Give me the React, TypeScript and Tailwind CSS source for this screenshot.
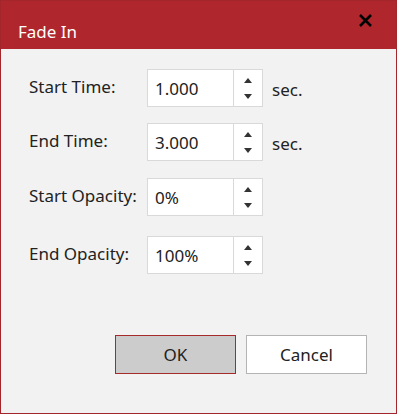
import { useState } from "react";

const font = { fontFamily: '"Segoe UI", "Noto Sans", "Open Sans", sans-serif' };

function Spin({ value, unit }: { value: string; unit?: string }) {
  return (
    <div className="flex items-center">
      <div className="flex h-[38px] border border-[#d9d9d9] bg-white">
        <div className="w-[85px] pl-[7px] pt-[9px] text-[17px] leading-[20px] text-[#222]">{value}</div>
        <div className="w-[29px] border-l border-[#d9d9d9] flex flex-col items-center justify-center gap-[11px]">
          <svg width="8" height="5" viewBox="0 0 8 5"><path d="M4 0 L8 5 L0 5 Z" fill="#333" /></svg>
          <svg width="8" height="5" viewBox="0 0 8 5"><path d="M0 0 L8 0 L4 5 Z" fill="#333" /></svg>
        </div>
      </div>
      {unit && <span className="ml-[9px] pt-[4px] text-[17px] text-[#222]">{unit}</span>}
    </div>
  );
}

function Row({ label, value, unit, mt }: { label: string; value: string; unit?: string; mt: string }) {
  return (
    <div className={`flex items-center ${mt}`}>
      <div className="w-[118px] pb-[3px] text-[17px] text-[#222]">{label}</div>
      <Spin value={value} unit={unit} />
    </div>
  );
}

export default function App() {
  const [open] = useState(true);
  if (!open) return null;
  return (
    <div style={font} className="w-[397px] h-[414px] border border-[#a3262c] bg-[#f2f2f2] flex flex-col">
      <div className="h-[48px] bg-[#b0262d] flex items-center justify-between pl-[17px] pr-[24px] shrink-0">
        <span className="pt-[14px] text-[17px] text-white">Fade In</span>
        <svg width="13" height="13" viewBox="0 0 13 13" className="mb-[10px]">
          <path d="M1 1 L12 12 M12 1 L1 12" stroke="#000" strokeWidth="2.6" />
        </svg>
      </div>
      <div className="flex flex-col pl-[28px] pt-[20px]">
        <Row label="Start Time:" value="1.000" unit="sec." mt="" />
        <Row label="End Time:" value="3.000" unit="sec." mt="mt-[16px]" />
        <Row label="Start Opacity:" value="0%" mt="mt-[17px]" />
        <Row label="End Opacity:" value="100%" mt="mt-[20px]" />
      </div>
      <div className="flex justify-end gap-[10px] pr-[29px] mt-[61px]">
        <button className="w-[121px] h-[39px] border border-[#a52a2a] bg-[#cccccc] text-[17px] text-[#222]">OK</button>
        <button className="w-[121px] h-[39px] border border-[#b4b4b4] bg-white text-[17px] text-[#222]">Cancel</button>
      </div>
    </div>
  );
}
